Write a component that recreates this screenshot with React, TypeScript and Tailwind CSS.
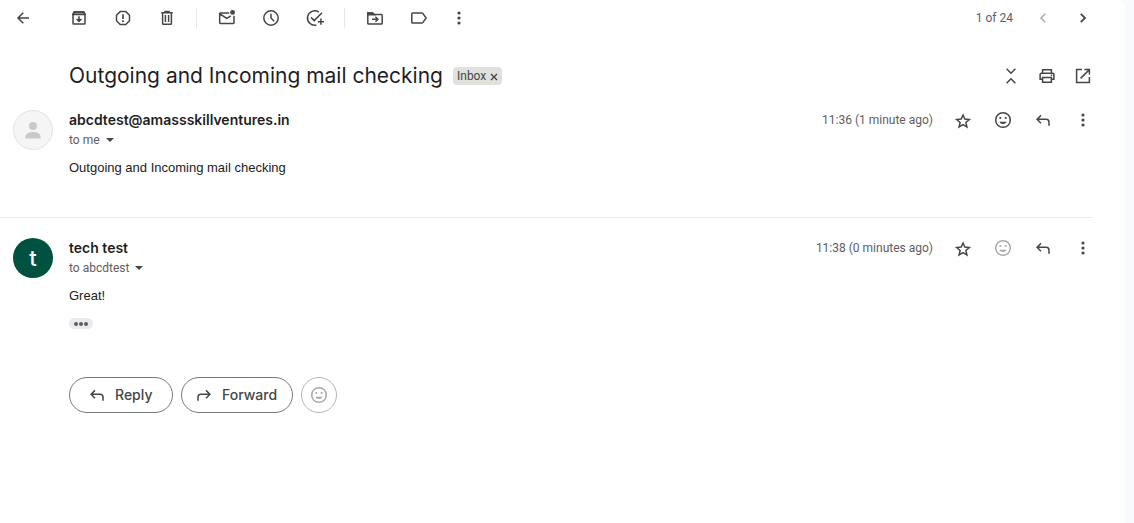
import type { ReactNode } from 'react';
import clsx from 'clsx';

const icons: Record<string, ReactNode> = {
  back: <path d="M16 10H5M10.3 4.7 5 10l5.3 5.3" />,
  archive: (
    <>
      <path d="M4 6.2V15.2q0 .8.8.8h10.4q.8 0 .8-.8V6.2L14.8 4H5.2L4 6.2ZM10 8.2v5M7.6 11 10 13.4l2.4-2.4" />
      <path d="M4 6.4h12L14.8 4H5.2Z" fill="currentColor" fillOpacity=".5" />
    </>
  ),
  spam: (
    <>
      <path d="M7.2 3.6h5.6l3.7 3.7v5.5l-3.7 3.7H7.2l-3.7-3.7V7.3Z" strokeLinejoin="round" />
      <path d="M10 6.2v4.8M10 12.3v1.7" strokeWidth="1.7" />
    </>
  ),
  trash: <path d="M5.6 5v10.4q0 .8.8.8h7.2q.8 0 .8-.8V5M4.2 4.7h11.6M8 4V3.4h4V4M8.4 7v7M11.6 7v7" />,
  unread: (
    <>
      <path d="M12.2 5H3.4q-.7 0-.7.7v9.1q0 .7.7.7h12.9q.7 0 .7-.7V7.8M3 6l6.8 4.4 4-2.6" />
      <circle cx="15.6" cy="4.4" r="2.4" fill="currentColor" stroke="none" />
    </>
  ),
  clock: <path d="M10 2.8a7.2 7.2 0 1 0 0 14.4 7.2 7.2 0 0 0 0-14.4ZM10 5.8V10l3.2 3.2" />,
  task: <path d="M13.8 4.1A7.2 7.2 0 1 0 11.4 17M6 9.4 9.2 12.6 17 4.8M15.9 10.6v6.2M12.8 13.7H19" />,
  move: (
    <>
      <path d="M2.8 15.2V5h4.8l1.6 1.5h7.2q.8 0 .8.8v7.9q0 .8-.8.8H3.6q-.8 0-.8-.8ZM7 11.2h5.6M10.4 8.7l2.5 2.5-2.5 2.5" />
      <path d="M2.8 6.7V5h4.8l1.6 1.7Z" fill="currentColor" />
    </>
  ),
  label: <path d="M3.6 4.9h9.2q.6 0 1 .5l3.3 4.6-3.3 4.6q-.4.5-1 .5H3.6q-.8 0-.8-.8V5.7q0-.8.8-.8Z" />,
  more: (
    <g fill="currentColor" stroke="none">
      <circle cx="10" cy="5" r="1.6" />
      <circle cx="10" cy="10" r="1.6" />
      <circle cx="10" cy="15" r="1.6" />
    </g>
  ),
  prev: <path d="M12.2 5.8 8 10l4.2 4.2" />,
  next: <path d="M7.8 5.8 12 10l-4.2 4.2" strokeWidth="1.8" />,
  collapse: <path d="M5.6 2.8 10 7.2l4.4-4.4M5.6 17.2 10 12.8l4.4 4.4" />,
  print: <path d="M5.6 6.8V3.8h8.8v3M5.6 13.2H3.1V8.6q0-1.4 1.4-1.4h11q1.4 0 1.4 1.4v4.6h-2.5M5.6 11.4h8.8v4.8H5.6ZM13.8 9.2h1.4" />,
  open: <path d="M9 3.6H3.6v12.8h12.8V11M11.4 3.6h5v5M16 4 7.6 12.4" />,
  star: <path d="m10 5 1.8 4.1 4.5.4-3.4 3 1 4.4L10 14.600l-3.900 2.300 1-4.400-3.400-3 4.500-.4Z" />,
  smile: (
    <>
      <circle cx="10" cy="10" r="7.300" />
      <g fill="currentColor" stroke="none">
        <circle cx="7.300" cy="8" r="1.100" />
        <circle cx="12.700" cy="8" r="1.100" />
        <path d="M6.300 11.700h7.400a3.900 3.200 0 0 1-7.400 0Z" />
      </g>
    </>
  ),
  reply: <path d="M8 5.4 4.1 9.3 8 13.2M4.1 9.3h9q2.9 0 2.9 2.9v3.6" />,
  forward: <path d="M12 5.4l3.9 3.9-3.9 3.9M15.9 9.3h-9Q4 9.3 4 12.2v3.6" />,
};

function Icon({ name }: { name: string }) {
  return (
    <svg viewBox="0 0 20 20" className="size-5 shrink-0" fill="none" stroke="currentColor" strokeWidth="1.5" aria-hidden="true">
      {icons[name]}
    </svg>
  );
}

function IconButton({ name, label, className, disabled }: { name: string; label: string; className: string; disabled?: boolean }) {
  return (
    <button
      type="button"
      aria-label={label}
      disabled={disabled}
      className={clsx('flex h-9 shrink-0 items-center justify-center', disabled ? 'text-[#a9aaaa]' : 'text-[#444746]', className)}
    >
      <Icon name={name} />
    </button>
  );
}

function Separator() {
  return <div className="mr-2 ml-[7px] h-5 w-px bg-[#e3e8f0]" />;
}

type MessageProps = {
  sender: string;
  recipient: string;
  time: string;
  avatar: ReactNode;
  canReact: boolean;
  children: ReactNode;
};

function Message({ sender, recipient, time, avatar, canReact, children }: MessageProps) {
  return (
    <article className="flex pl-[13px]">
      {avatar}
      <div className="ml-4 min-w-0 flex-1">
        <header className="flex h-10 items-start">
          <div className="flex-1">
            <h3 className="text-sm/5 font-semibold text-[#1f1f1f]">{sender}</h3>
            <button type="button" className="flex h-5 items-center gap-[6px] font-[Roboto,sans-serif] text-xs/5 text-[#5e5e5e]">
              to {recipient}
              <span className="border-x-4 border-t-4 border-x-transparent border-t-[#444746]" />
            </button>
          </div>
          <div className="flex h-5 items-center pr-[22px]">
            <time className="mr-[10px] font-[Roboto,sans-serif] text-xs text-[#5e5e5e]">{time}</time>
            <IconButton name="star" label="Star" className="w-10" />
            <IconButton name="smile" label="Add reaction" className="w-10" disabled={!canReact} />
            <IconButton name="reply" label="Reply" className="w-10" />
            <IconButton name="more" label="More" className="w-10" />
          </div>
        </header>
        <div className="mt-2 font-['Liberation_Sans',Arial,sans-serif] text-[13px]/5 text-[#222222]">{children}</div>
      </div>
    </article>
  );
}

export default function App() {
  return (
    <div className="min-h-screen bg-[#f8fafd] pr-[9px] font-['Inter',sans-serif]">
      <main className="min-h-screen rounded-tr-lg bg-white">
        <nav className="flex h-9 items-center pr-[22px]">
          <IconButton name="back" label="Back to Inbox" className="mr-[11px] w-[46px]" />
          <IconButton name="archive" label="Archive" className="w-11" />
          <IconButton name="spam" label="Report spam" className="w-11" />
          <IconButton name="trash" label="Delete" className="w-11" />
          <Separator />
          <IconButton name="unread" label="Mark as unread" className="w-11" />
          <IconButton name="clock" label="Snooze" className="w-11" />
          <IconButton name="task" label="Add to Tasks" className="w-11" />
          <Separator />
          <IconButton name="move" label="Move to" className="w-11" />
          <IconButton name="label" label="Labels" className="w-11" />
          <IconButton name="more" label="More" className="w-9" />
          <span className="mr-[10px] ml-auto font-[Roboto,sans-serif] text-xs text-[#5e5e5e]">1 of 24</span>
          <IconButton name="prev" label="Newer" className="w-10" disabled />
          <IconButton name="next" label="Older" className="w-10" />
        </nav>

        <header className="mt-5 flex h-10 items-center pr-6 pl-[69px]">
          <h2 className="text-[21px]/7 text-[#1f1f1f]">Outgoing and Incoming mail checking</h2>
          <span className="ml-[10px] flex h-[18px] items-center gap-1 rounded bg-[#dfe1dd] px-1 font-[Roboto,sans-serif] text-xs text-[#444746]">
            Inbox
            <button type="button" aria-label="Remove label Inbox">
              <svg viewBox="0 0 8 8" className="mt-px size-2" stroke="currentColor" strokeWidth="1.4" aria-hidden="true">
                <path d="m1 1 6 6M7 1 1 7" />
              </svg>
            </button>
          </span>
          <div className="ml-auto flex">
            <IconButton name="collapse" label="Collapse all" className="w-9" />
            <IconButton name="print" label="Print all" className="w-9" />
            <IconButton name="open" label="In new window" className="w-9" />
          </div>
        </header>

        <section className="mt-[14px]">
          <Message
            sender="abcdtest@amassskillventures.in"
            recipient="me"
            time="11:36 (1 minute ago)"
            canReact
            avatar={
              <div className="flex size-10 items-center justify-center rounded-full border border-[#e2e2e2] bg-[#f5f5f5] text-[#c9c9c9]">
                <svg viewBox="0 0 16 18" className="h-[18px] w-4" fill="currentColor" aria-hidden="true">
                  <circle cx="8" cy="5" r="4" />
                  <path d="M.5 17.5v-2.2C.5 12.4 5 11 8 11s7.5 1.4 7.5 4.3v2.2Z" />
                </svg>
              </div>
            }
          >
            <p>Outgoing and Incoming mail checking</p>
          </Message>
        </section>

        <hr className="mt-[39px] mr-8 border-[#ebebeb]" />

        <section className="mt-5">
          <Message
            sender="tech test"
            recipient="abcdtest"
            time="11:38 (0 minutes ago)"
            canReact={false}
            avatar={
              <div className="flex size-10 items-center justify-center rounded-full bg-[#00513f] text-[22px] font-medium text-white">t</div>
            }
          >
            <p>Great!</p>
            <button
              type="button"
              aria-label="Show trimmed content"
              className="mt-3 flex h-[11px] w-6 items-center justify-center gap-px rounded-full bg-[#e8eaed]"
            >
              <span className="size-1 rounded-full bg-[#5b5e5d]" />
              <span className="size-1 rounded-full bg-[#5b5e5d]" />
              <span className="size-1 rounded-full bg-[#5b5e5d]" />
            </button>
          </Message>
        </section>

        <div className="mt-12 flex gap-2 pl-[69px] text-sm font-medium text-[#444746]">
          <button type="button" className="flex h-9 w-[104px] items-center gap-2 rounded-full border border-[#747775] pl-[17px]">
            <Icon name="reply" />
            Reply
          </button>
          <button type="button" className="flex h-9 w-28 items-center gap-2 rounded-full border border-[#747775] pl-3">
            <Icon name="forward" />
            Forward
          </button>
          <button
            type="button"
            aria-label="Add reaction"
            disabled
            className="flex size-9 items-center justify-center rounded-full border border-[#b4b5b5] text-[#a9aaaa]"
          >
            <Icon name="smile" />
          </button>
        </div>
      </main>
    </div>
  );
}
